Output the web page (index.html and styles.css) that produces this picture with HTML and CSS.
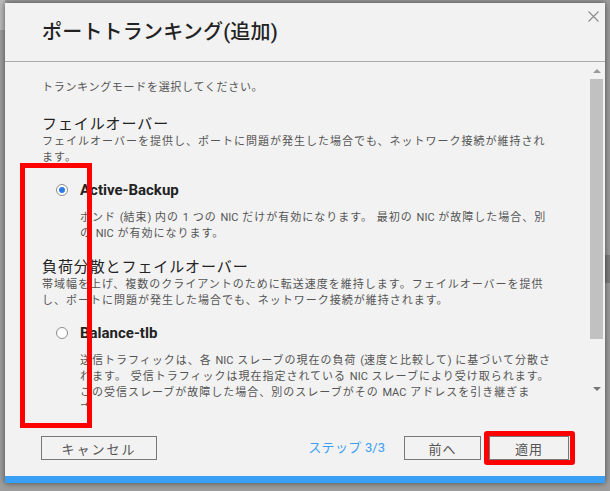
FILE: index.html
```html
<!DOCTYPE html>
<html lang="ja">
<head>
<meta charset="utf-8">
<title>ポートトランキング(追加)</title>
<link rel="stylesheet" href="styles.css">
</head>
<body>
<div class="backdrop">
  <div class="dialog">
    <div class="header">
      <h1 class="title">ポートトランキング(追加)</h1>
      <svg class="close" width="11" height="11" viewBox="0 0 11 11"><path d="M0.5 0.5 L10.5 10.5 M10.5 0.5 L0.5 10.5" stroke="#8a8a8a" stroke-width="1.1" fill="none"/></svg>
    </div>
    <div class="main">
      <div class="content">
        <p class="instr">トランキングモードを選択してください。</p>
        <h2 class="section">フェイルオーバー</h2>
        <p class="desc">フェイルオーバーを提供し、ポートに問題が発生した場合でも、ネットワーク接続が維持され<br>ます。</p>
        <div class="option">
          <span class="radio checked"></span>
          <span class="opt-label">Active-Backup</span>
        </div>
        <p class="desc indent">ボンド <span class="lat">(</span>結束<span class="lat">)</span> 内の <span class="lat">1</span> つの <span class="lat">NIC</span> だけが有効になります。 最初の <span class="lat">NIC</span> が故障した場合、別<br>の <span class="lat">NIC</span> が有効になります。</p>
        <h2 class="section second">負荷分散とフェイルオーバー</h2>
        <p class="desc">帯域幅を上げ、複数のクライアントのために転送速度を維持します。フェイルオーバーを提供<br>し、ポートに問題が発生した場合でも、ネットワーク接続が維持されます。</p>
        <div class="option">
          <span class="radio"></span>
          <span class="opt-label">Balance-tlb</span>
        </div>
        <p class="desc indent">送信トラフィックは、各 <span class="lat">NIC</span> スレーブの現在の負荷 <span class="lat">(</span>速度と比較して<span class="lat">)</span> に基づいて分散さ<br>れます。 受信トラフィックは現在指定されている <span class="lat">NIC</span> スレーブにより受け取られます。<br>この受信スレーブが故障した場合、別のスレーブがその <span class="lat">MAC</span> アドレスを引き継ぎま<br>す。</p>
      </div>
      <div class="scrollbar">
        <div class="arrow"><span class="tri up"></span></div>
        <div class="thumb"></div>
        <div class="track"></div>
        <div class="arrow"><span class="tri down"></span></div>
      </div>
    </div>
    <div class="footer">
      <button class="btn cancel">キャンセル</button>
      <span class="step">ステップ <span class="lat">3/3</span></span>
      <button class="btn prev">前へ</button>
      <button class="btn apply">適用</button>
    </div>
    <div class="bluebar"></div>
  </div>
  <div class="mark mark-left"></div>
  <div class="mark mark-right"></div>
</div>
</body>
</html>
```

FILE: styles.css
```css
* { box-sizing: border-box; }
html, body { margin: 0; padding: 0; }
body {
  width: 610px;
  height: 491px;
  overflow: hidden;
  background: #9d9d9d;
  font-family: Roboto, "Noto Sans CJK JP", sans-serif;
}
.backdrop {
  position: relative;
  width: 610px;
  height: 491px;
  padding: 3px 0 0 5px;
  background:
    linear-gradient(#7d7d7d, #7d7d7d) right 0 top 255px / 5px 28px no-repeat,
    linear-gradient(#b9b9b9, #b9b9b9) 0 0 / 5px 30px no-repeat,
    #9d9d9d;
}
.dialog {
  width: 600px;
  height: 480px;
  background: #f2f2f2;
  box-shadow: 0 0 6px rgba(0,0,0,0.55);
  display: flex;
  flex-direction: column;
}
.header {
  height: 59px;
  flex: none;
  border-bottom: 1px solid #ababab;
  display: flex;
  padding-left: 37px;
}
.title {
  margin: 0;
  align-self: center;
  font-size: 20px;
  font-weight: 500;
  color: #222;
  letter-spacing: 0.2px;
  margin-top: -4px;
}
.close {
  margin-left: auto;
  margin-right: 6px;
  margin-top: 8px;
}
.main {
  height: 344px;
  flex: none;
  display: flex;
  overflow: hidden;
}
.content {
  flex: 1;
  padding: 18px 0 0 37px;
  overflow: hidden;
  white-space: nowrap;
}
.lat { letter-spacing: 0; }
.instr {
  margin: 0;
  font-size: 11px;
  line-height: 16px;
  color: #555;
  letter-spacing: 0.7px;
}
.section {
  margin: 18px 0 0;
  font-size: 15px;
  line-height: 20px;
  font-weight: 400;
  color: #222;
  letter-spacing: 0.9px;
}
.section.second { margin-top: 15px; }
.desc {
  margin: 0;
  font-size: 11px;
  line-height: 16px;
  color: #555;
  letter-spacing: 1px;
}
.desc.indent {
  padding-left: 38px;
  margin-top: 10px;
}
.option {
  margin-top: 14px;
  height: 20px;
  display: flex;
  align-items: center;
  padding-left: 14px;
  gap: 12px;
}
.radio {
  width: 12px;
  height: 12px;
  border: 1px solid #8c8c8c;
  border-radius: 50%;
  background: #fff;
  display: flex;
  align-items: center;
  justify-content: center;
}
.radio.checked::after {
  content: "";
  width: 6px;
  height: 6px;
  border-radius: 50%;
  background: #2f7be5;
}
.opt-label {
  font-size: 15px;
  font-weight: 700;
  color: #222;
}
.scrollbar {
  width: 13px;
  margin-right: 2px;
  flex: none;
  display: flex;
  flex-direction: column;
}
.arrow {
  height: 17px;
  display: flex;
  align-items: center;
  justify-content: center;
}
.tri {
  width: 0;
  height: 0;
  border-left: 4px solid transparent;
  border-right: 4px solid transparent;
}
.tri.up { border-bottom: 4px solid #999; }
.tri.down { border-top: 4px solid #777; }
.thumb {
  height: 260px;
  background: #c1c1c1;
}
.track { height: 41px; }
.footer {
  height: 70px;
  flex: none;
  display: flex;
  align-items: flex-start;
  padding: 30px 36px 0;
}
.btn {
  height: 24px;
  border: 1px solid #777;
  background: #f2f2f2;
  color: #555;
  font-family: Roboto, "Noto Sans CJK JP", sans-serif;
  font-size: 13px;
  padding: 0;
  letter-spacing: 1px;
}
.cancel { width: 116px; letter-spacing: 2px; }
.step {
  margin-left: auto;
  margin-right: 19px;
  height: 24px;
  line-height: 24px;
  font-size: 13px;
  color: #3a9ff5;
  letter-spacing: 0.3px;
}
.prev { width: 77px; margin-right: 8px; }
.apply { width: 80px; }
.bluebar {
  height: 7px;
  flex: none;
  background: #3aa0f6;
}
.mark {
  position: absolute;
  border: 5px solid #ff0000;
}
.mark-left {
  left: 20px;
  top: 163px;
  width: 72px;
  height: 265px;
}
.mark-right {
  left: 484px;
  top: 431px;
  width: 91px;
  height: 34px;
  border-radius: 3px;
}
```
